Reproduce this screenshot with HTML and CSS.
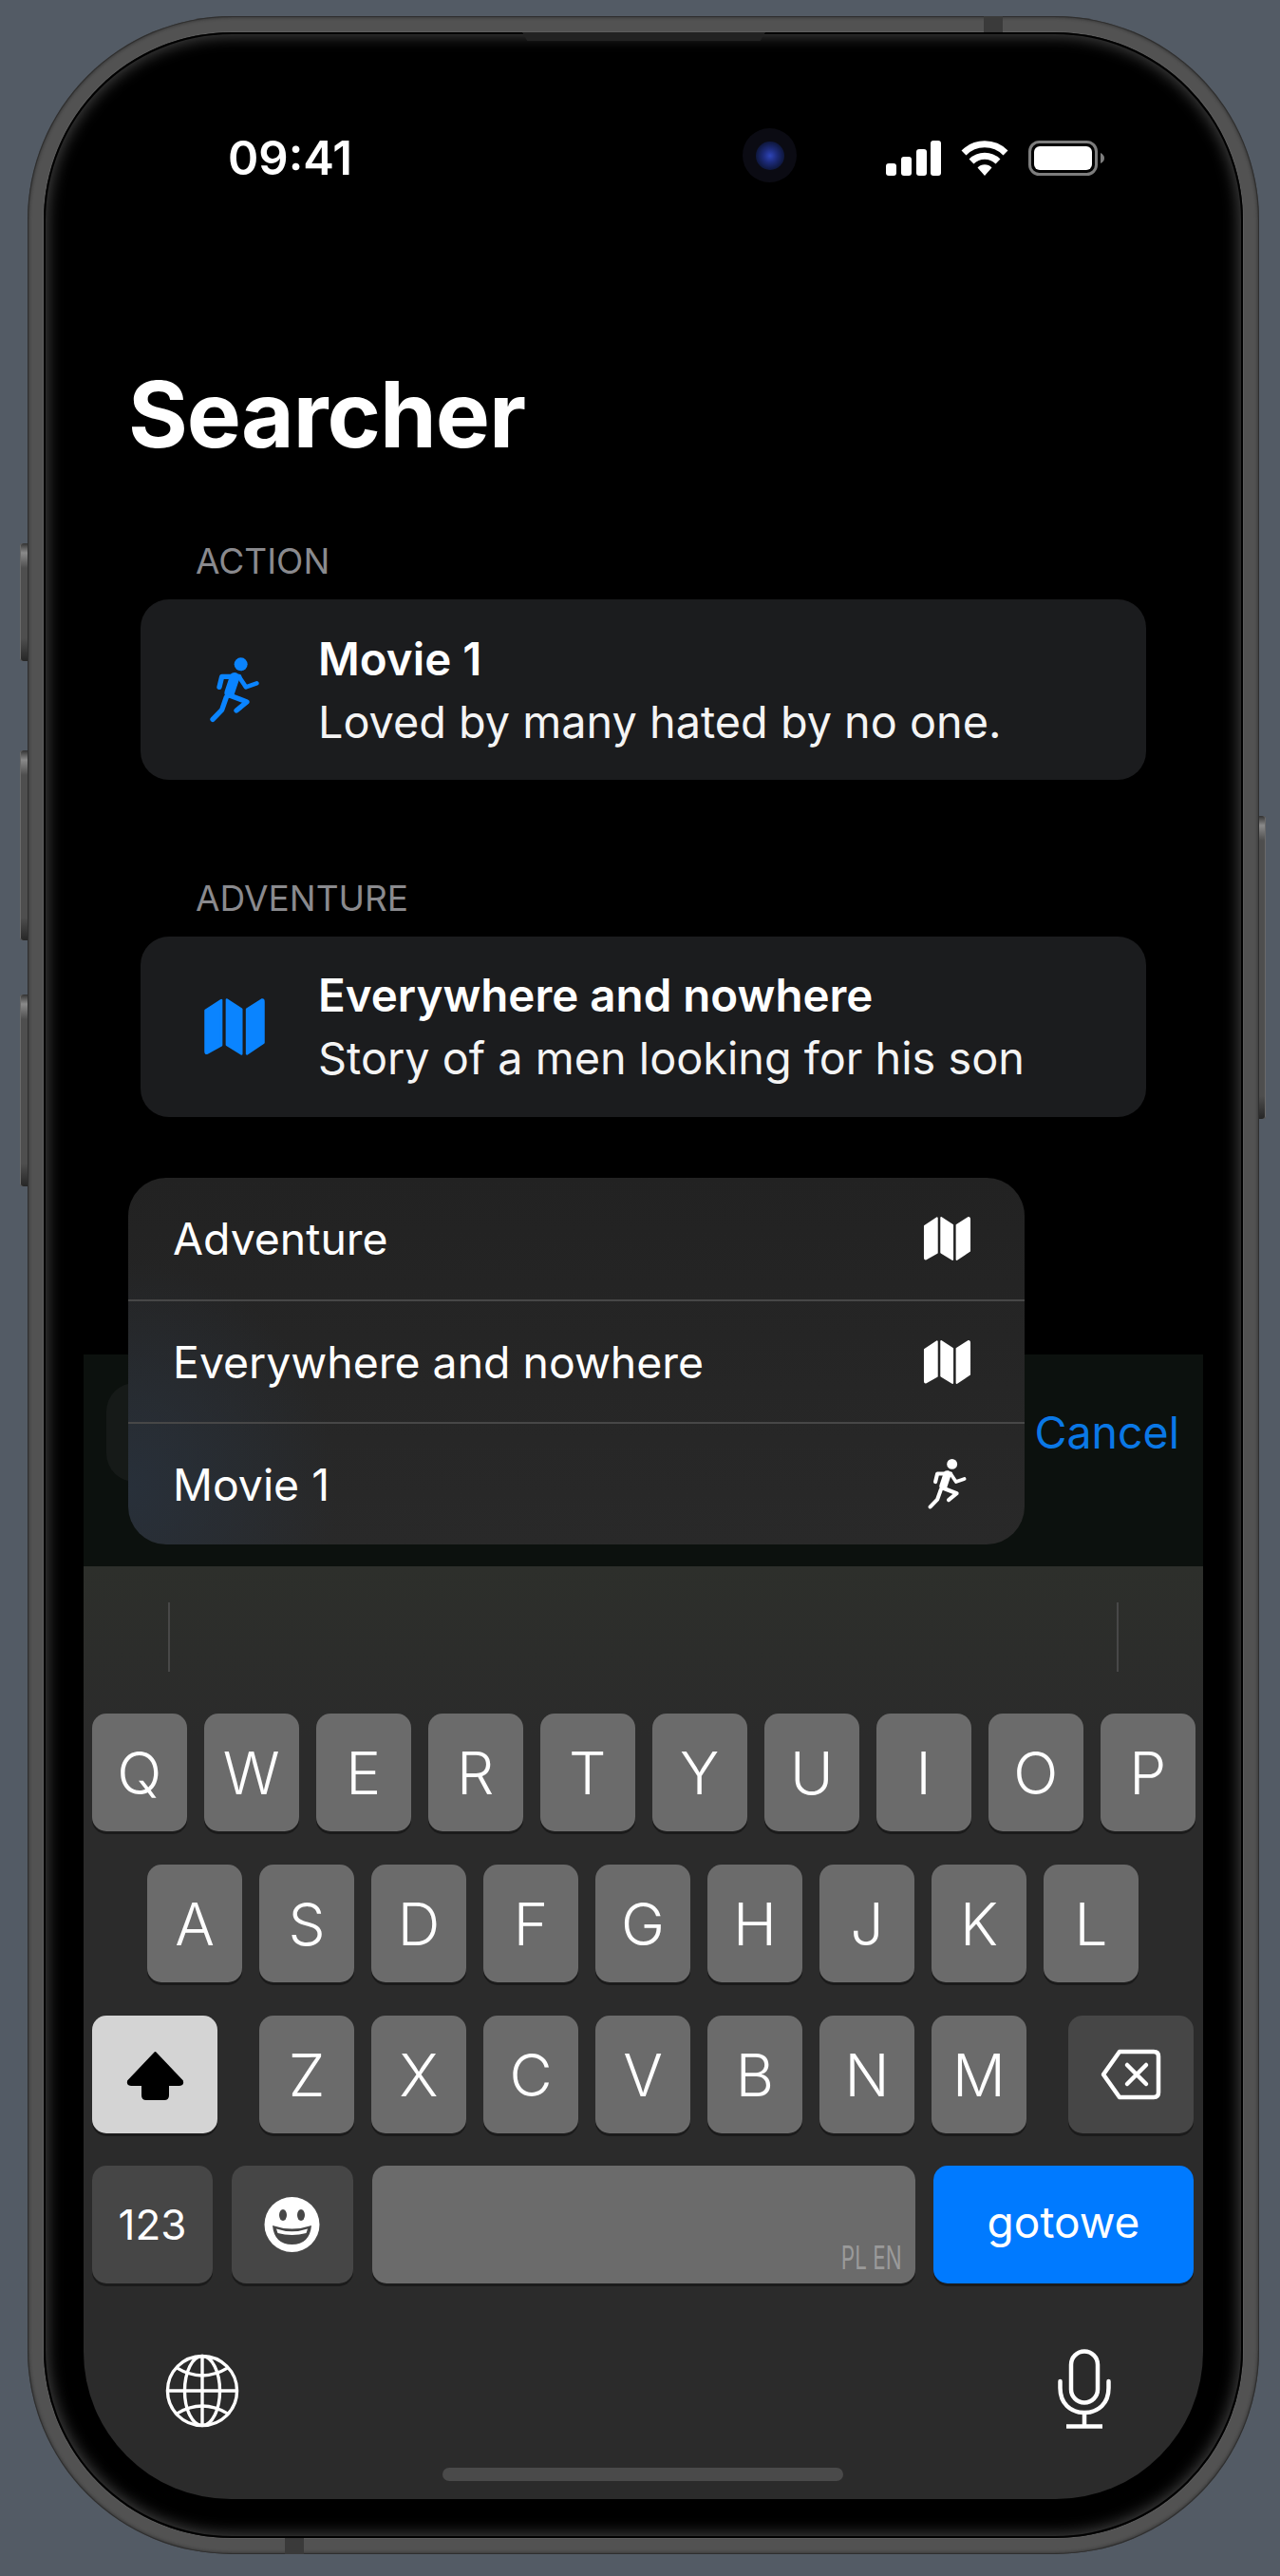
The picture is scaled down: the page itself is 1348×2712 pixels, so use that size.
FILE: index.html
```html
<!DOCTYPE html>
<html lang="en">
<head>
<meta charset="utf-8">
<title>Searcher</title>
<link rel="stylesheet" href="styles.css">
</head>
<body>
<svg class="defs" width="0" height="0" aria-hidden="true">
  <symbol id="map" viewBox="-3 -3 159 149">
    <g fill="currentColor" stroke="currentColor" stroke-width="6" stroke-linejoin="round">
      <path d="M3 30 L43 4 V118 L7 138 Q3 140 3 134 Z"/>
      <path d="M57 3 L94 27 V140 L57 117 Z"/>
      <path d="M108 27 L146 3 Q150 2 150 8 V112 L108 140 Z"/>
    </g>
  </symbol>
  <symbol id="run" viewBox="120 67 156 205">
    <circle cx="218" cy="88" r="21" fill="currentColor"/>
    <g fill="none" stroke="currentColor" stroke-linecap="round" stroke-linejoin="round">
      <path d="M212 127 H158 L150 160" stroke-width="16"/>
      <path d="M198 130 L182 178" stroke-width="32"/>
      <path d="M212 127 L234 160 L268 148" stroke-width="14"/>
      <path d="M182 186 L237 207 L204 234" stroke-width="16"/>
      <path d="M172 192 L158 232 L129 262" stroke-width="16"/>
    </g>
  </symbol>
</svg>

<div class="phone">
  <span class="btn btn-a"></span>
  <span class="btn btn-b"></span>
  <span class="btn btn-c"></span>
  <span class="btn btn-r"></span>
  <span class="band band-top"></span>
  <span class="band band-bottom"></span>
  <span class="speaker"></span>
  <span class="camera"><span class="lens"></span></span>

  <div class="bezel">
    <div class="screen">
      <div class="status">
        <span class="time">09:41</span>
        <div class="status-icons">
          <svg class="signal" width="58" height="37" viewBox="0 0 58 37" fill="#fff">
            <rect x="0" y="24" width="11" height="13" rx="3"/>
            <rect x="16" y="17" width="11" height="20" rx="3"/>
            <rect x="32" y="9" width="11" height="28" rx="3"/>
            <rect x="47" y="0" width="11" height="37" rx="3"/>
          </svg>
          <svg class="wifi" width="50" height="37" viewBox="0 0 50 37" fill="none" stroke="#fff" stroke-width="7">
            <path d="M3 13 A31 31 0 0 1 47 13"/>
            <path d="M11 22 A20 20 0 0 1 39 22"/>
            <path d="M17.500 28.500 L25 37 L32.500 28.500 A10.500 10.500 0 0 0 17.500 28.500 Z" fill="#fff" stroke="none"/>
          </svg>
          <svg class="battery" width="80" height="37" viewBox="0 0 80 37">
            <rect x="1.500" y="1.500" width="70" height="34" rx="10" fill="none" stroke="#7d7d7d" stroke-width="3"/>
            <rect x="6" y="6" width="61" height="25" rx="6" fill="#fff"/>
            <path d="M76 13 Q80 15 80 18.500 Q80 22 76 24 Z" fill="#7d7d7d"/>
          </svg>
        </div>
      </div>

      <main class="main">
        <h1 class="title">Searcher</h1>
        <section class="group">
          <h2 class="group-label">ACTION</h2>
          <div class="card">
            <span class="card-icon"><svg class="icon-run"><use href="#run"/></svg></span>
            <div class="card-text">
              <div class="card-title">Movie 1</div>
              <div class="card-sub">Loved by many hated by no one.</div>
            </div>
          </div>
        </section>
        <section class="group">
          <h2 class="group-label">ADVENTURE</h2>
          <div class="card">
            <span class="card-icon"><svg class="icon-map"><use href="#map"/></svg></span>
            <div class="card-text">
              <div class="card-title">Everywhere and nowhere</div>
              <div class="card-sub">Story of a men looking for his son</div>
            </div>
          </div>
        </section>
      </main>

      <div class="searchbar">
        <div class="field"></div>
        <span class="cancel">Cancel</span>
      </div>

      <div class="keyboard">
        <div class="candidates"><i></i><i></i></div>
        <div class="row">
          <span class="key">Q</span><span class="key">W</span><span class="key">E</span><span class="key">R</span><span class="key">T</span><span class="key">Y</span><span class="key">U</span><span class="key">I</span><span class="key">O</span><span class="key">P</span>
        </div>
        <div class="row row-center">
          <span class="key">A</span><span class="key">S</span><span class="key">D</span><span class="key">F</span><span class="key">G</span><span class="key">H</span><span class="key">J</span><span class="key">K</span><span class="key">L</span>
        </div>
        <div class="row row-between">
          <span class="key key-shift">
            <svg width="63" height="53" viewBox="0 0 63 53"><path d="M31.500 3 L60 33 Q61 37 57 37 H45 V48 Q45 52 41 52 H22 Q18 52 18 48 V37 H6 Q2 37 3 33 Z" fill="#000" stroke="#000" stroke-width="2" stroke-linejoin="round"/></svg>
          </span>
          <div class="letters">
            <span class="key">Z</span><span class="key">X</span><span class="key">C</span><span class="key">V</span><span class="key">B</span><span class="key">N</span><span class="key">M</span>
          </div>
          <span class="key key-dark key-back">
            <svg width="64" height="54" viewBox="0 0 64 54" fill="none" stroke="#fff" stroke-width="4.500" stroke-linejoin="round" stroke-linecap="round">
              <path d="M20 3 H56 Q61 3 61 8 V46 Q61 51 56 51 H20 L3 27 Z"/>
              <path d="M28 17 L48 37 M48 17 L28 37"/>
            </svg>
          </span>
        </div>
        <div class="row row-bottom">
          <span class="key key-dark key-num">123</span>
          <span class="key key-dark key-emoji">
            <svg width="59" height="58" viewBox="0 0 59 58">
              <circle cx="29.500" cy="29" r="29" fill="#fff"/>
              <ellipse cx="20" cy="19" rx="4" ry="6" fill="#464646"/>
              <ellipse cx="39" cy="19" rx="4" ry="6" fill="#464646"/>
              <path d="M9 30 Q29.500 37 50 30 Q48 50 29.500 50 Q11 50 9 30 Z" fill="#464646"/>
              <path d="M13 33.500 Q29.500 39 46 33.500 L44.500 38 Q29.500 42 14.500 38 Z" fill="#fff"/>
            </svg>
          </span>
          <span class="key key-space"><span class="lang">PL EN</span></span>
          <span class="key key-go">gotowe</span>
        </div>
        <div class="tools">
          <svg class="globe" width="78" height="78" viewBox="0 0 80 80" fill="none" stroke="#fff" stroke-width="3.500">
            <circle cx="40" cy="40" r="37.500"/>
            <ellipse cx="40" cy="40" rx="19" ry="37.500"/>
            <path d="M40 2.500 V77.500 M2.500 40 H77.500"/>
            <path d="M12 15 Q40 32 68 15 M12 65 Q40 48 68 65"/>
          </svg>
          <svg class="mic" width="56" height="84" viewBox="0 0 56 84" fill="none" stroke="#fff" stroke-width="4.500" stroke-linecap="round">
            <rect x="14" y="2.500" width="28" height="54" rx="14"/>
            <path d="M2.500 34 V41 C2.500 57 13 67 28 67 C43 67 53.500 57 53.500 41 V34"/>
            <path d="M28 67 V81 M9 81.500 H47" stroke-linecap="butt"/>
          </svg>
        </div>
        <div class="home"></div>
      </div>

      <div class="popup">
        <div class="popup-item"><span>Adventure</span><svg class="popup-map"><use href="#map"/></svg></div>
        <div class="popup-item"><span>Everywhere and nowhere</span><svg class="popup-map"><use href="#map"/></svg></div>
        <div class="popup-item"><span>Movie 1</span><svg class="popup-run"><use href="#run"/></svg></div>
      </div>
    </div>
  </div>
</div>
</body>
</html>
```
FILE: styles.css
```css
* { box-sizing: border-box; }
html, body { margin: 0; height: 100%; }
body {
  background: #535b65;
  padding: 17px 0 0 29px;
  font-family: Inter, "Noto Sans", sans-serif;
  color: #fff;
  overflow: hidden;
}
.defs { position: absolute; }

.phone {
  position: relative;
  width: 1297px;
  height: 2672px;
  padding: 17px;
  border-radius: 215px;
  background: #525252;
  box-shadow: inset 0 0 0 1px #2e2e2e, inset 0 0 3px 2px rgba(40, 40, 40, .55);
}
.btn {
  position: absolute;
  left: -8px;
  width: 8px;
  border-radius: 3px 0 0 3px;
  background: linear-gradient(#333 0, #8a8a8a 10px, #4e4e4e 26px, #4e4e4e calc(100% - 24px), #262626 100%);
  box-shadow: inset 1px 0 0 #6a6a6a;
}
.btn-a { top: 555px; height: 124px; }
.btn-b { top: 773px; height: 200px; }
.btn-c { top: 1030px; height: 202px; }
.btn-r {
  left: auto;
  right: -7px;
  top: 842px;
  width: 7px;
  height: 319px;
  border-radius: 0 3px 3px 0;
  box-shadow: inset -1px 0 0 #6a6a6a;
}
.band { position: absolute; background: #3a3a3a; height: 17px; width: 20px; }
.band-top { top: 0; left: 1007px; }
.band-bottom { bottom: 0; left: 271px; }
.speaker {
  position: absolute;
  top: 17px;
  left: 521px;
  width: 256px;
  height: 9px;
  background: #222;
  clip-path: polygon(0 0, 100% 0, 98% 100%, 2% 100%);
  z-index: 2;
}
.camera {
  position: absolute;
  top: 118px;
  left: 753px;
  width: 57px;
  height: 57px;
  border-radius: 50%;
  background: #0b0b13;
  display: flex;
  align-items: center;
  justify-content: center;
  z-index: 2;
}
.lens {
  width: 30px;
  height: 30px;
  border-radius: 50%;
  background: radial-gradient(circle, #2e45b8 0, #1c2a78 35%, #101a45 65%, #0a0c22 100%);
}

.bezel {
  height: 100%;
  padding: 41px 42px;
  border-radius: 198px;
  background: #000;
  box-shadow: inset 0 0 0 2px #000, inset 0 0 16px 4px #444, 0 0 0 1px #5e5e5e;
}
.screen {
  position: relative;
  height: 2556px;
  display: flex;
  flex-direction: column;
  border-radius: 155px;
  overflow: hidden;
  background: #000;
}

.status {
  display: flex;
  justify-content: space-between;
  align-items: flex-start;
  padding: 73px 104px 0 152px;
}
.time {
  font-size: 49px;
  line-height: 37px;
  font-weight: 600;
}
.status-icons { display: flex; align-items: flex-start; }
.wifi { margin-left: 21px; }
.battery { margin-left: 21px; }

.main { flex: 1; min-height: 0; padding-top: 189px; }
.title {
  margin: 0 0 0 47px;
  font-size: 96px;
  line-height: 124px;
  font-weight: 700;
  letter-spacing: -1px;
}
.group { margin: 0 60px; }
.group-label {
  margin: 0 0 18px 58px;
  font-size: 37px;
  line-height: 44px;
  font-weight: 400;
  color: #8a8a8e;
}
.title + .group { margin-top: 71px; }
.group + .group { margin-top: 102.5px; }
.card {
  display: flex;
  align-items: center;
  height: 190px;
  border-radius: 30px;
  background: #1b1c1e;
}
.card-icon {
  flex: none;
  width: 187px;
  padding-left: 10px;
  display: flex;
  justify-content: center;
  color: #0a84ff;
}
.icon-run { width: 52px; height: 69px; }
.icon-map { width: 66px; height: 62px; }
.card-text { padding-top: 1px; }
.card-title { font-size: 47.5px; line-height: 66px; font-weight: 600; }
.card-sub { font-size: 46.8px; line-height: 66px; font-weight: 400; color: #f4f4f4; }

.searchbar {
  flex: none;
  height: 223px;
  display: flex;
  align-items: flex-start;
  padding: 30px 25px 0 24px;
  gap: 15px;
  background: #0c110e;
}
.field { flex: 1; height: 104px; border-radius: 30px; background: #161a18; }
.cancel { font-size: 46.500px; line-height: 104px; color: #0a78e6; }

.keyboard {
  flex: none;
  height: 982px;
  padding: 38px 10px 0 9px;
  background: linear-gradient(#2d2f2b, #2b2b2b 180px);
}
.candidates { display: flex; justify-content: space-between; padding: 0 79px 0 80px; height: 117px; }
.candidates i { width: 2px; height: 73px; background: #484848; }
.row { display: flex; gap: 18.5px; height: 124px; margin-bottom: 35px; }
.row-center { justify-content: center; }
.row-between { justify-content: space-between; margin-bottom: 34px; }
.letters { display: flex; gap: 18.5px; }
.row-bottom { gap: 20px; margin-bottom: 0; }
.key {
  flex: none;
  width: 99.5px;
  height: 124px;
  display: flex;
  align-items: center;
  justify-content: center;
  border-radius: 15px;
  background: #6b6b6b;
  box-shadow: 0 3px 0 #1b1b1b;
  font-size: 62px;
  font-weight: 350;
}
.key-dark { background: #464646; }
.key-shift { width: 132px; background: #d4d4d4; }
.key-back { width: 132px; }
.key-num { width: 127px; font-size: 44px; font-weight: 400; }
.key-emoji { width: 128px; padding-right: 2px; }
.key-space {
  width: 572px;
  align-items: flex-end;
  justify-content: flex-end;
  padding: 0 14px 14px 0;
}
.lang {
  font-size: 34px;
  line-height: 26px;
  font-weight: 400;
  color: #9a9a9a;
  transform: scaleX(.66);
  transform-origin: right center;
}
.key-go {
  width: 274px;
  margin-left: -1px;
  background: #007aff;
  font-size: 46px;
  font-weight: 400;
  padding-bottom: 6px;
}

.tools {
  display: flex;
  justify-content: space-between;
  align-items: flex-start;
  padding: 69px 87px 0 77px;
}
.globe { margin-top: 5px; }
.home {
  width: 422px;
  height: 14px;
  margin: 41px auto 0;
  border-radius: 7px;
  background: #4a4a4a;
}

.popup {
  position: absolute;
  top: 1165px;
  left: 47px;
  width: 944px;
  border-radius: 40px;
  overflow: hidden;
  background:
    radial-gradient(ellipse 220px 240px at 0 85%, #28303a 0, rgba(40,48,58,0) 100%),
    linear-gradient(#222, #292929);
}
.popup-item {
  display: flex;
  align-items: center;
  justify-content: space-between;
  height: 129px;
  padding: 0 56px 0 47px;
  font-size: 46.400px;
  border-top: 2px solid #474747;
}
.popup-item:first-child { border-top: 0; height: 128px; }
.popup-map { width: 51px; height: 48px; }
.popup-run { width: 41px; height: 53px; margin-right: 5px; }
```
